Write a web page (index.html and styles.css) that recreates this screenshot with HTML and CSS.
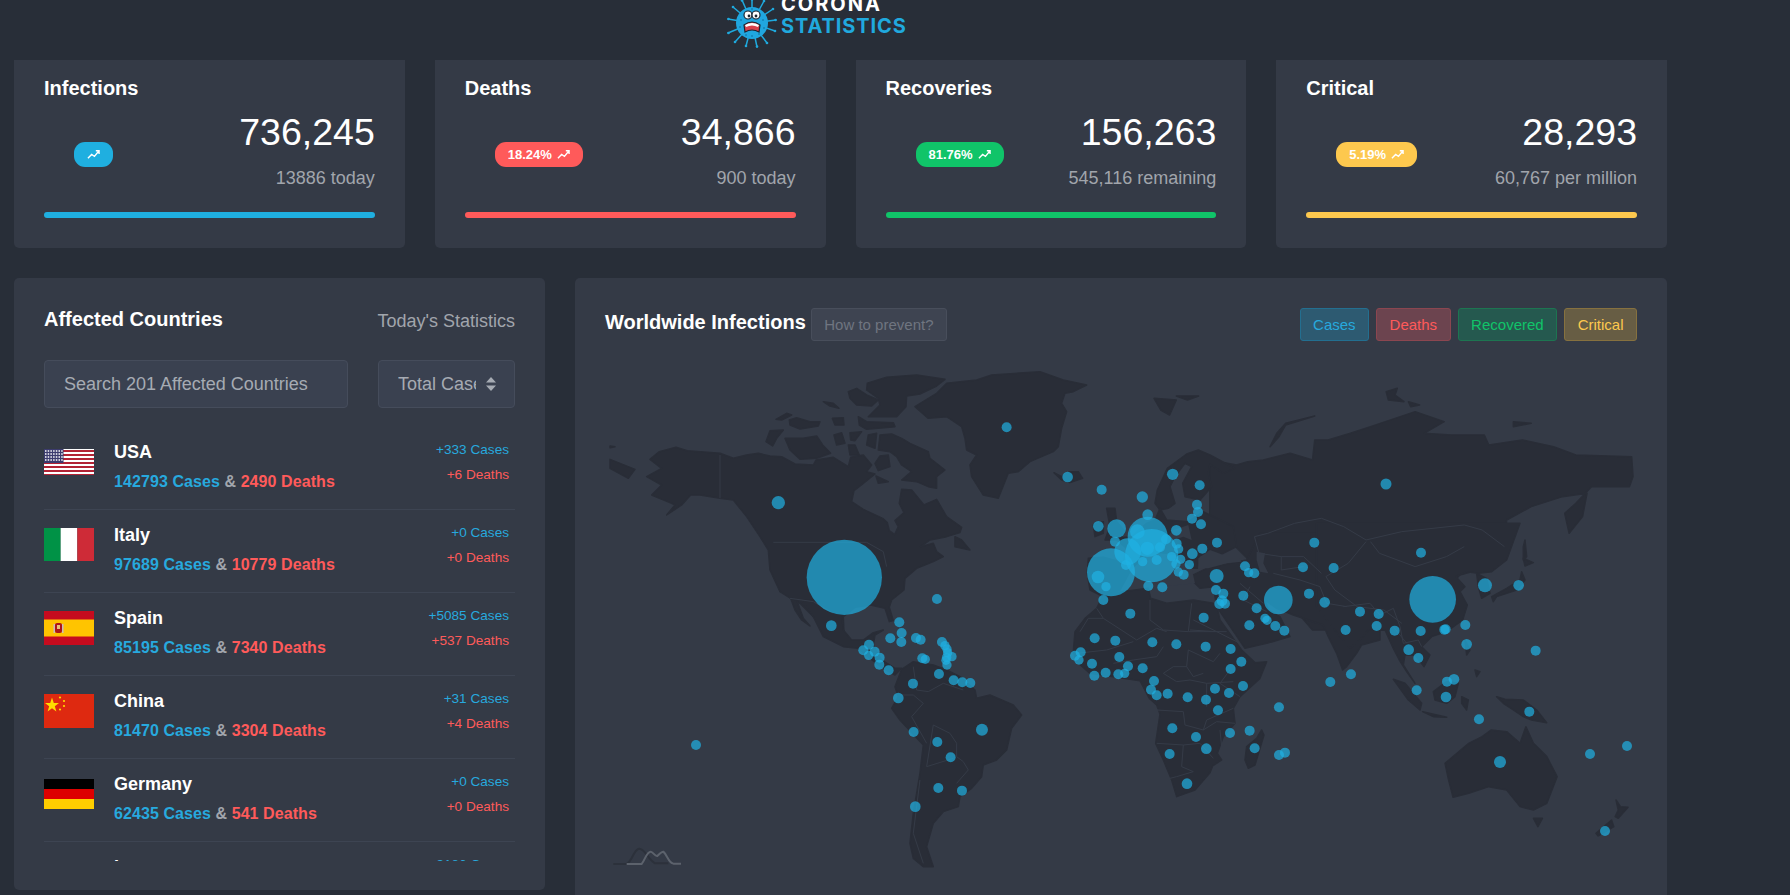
FILE: index.html
```html
<!DOCTYPE html>
<html lang="en">
<head>
<meta charset="utf-8">
<title>Corona Statistics</title>
<link rel="stylesheet" href="styles.css">
</head>
<body>
<header class="topbar">
  <div class="logo">
    <svg class="logo-mark" viewBox="0 0 50 50" width="50" height="50">
      <g class="spikes">
        <path d="M25 25L25 1M25 25L37 3M25 25L46 11M25 25L49 22M25 25L48 33M25 25L40 45M25 25L30 49M25 25L19 48M25 25L8 44M25 25L1 35M25 25L1 21M25 25L6 9M25 25L15 2"/>
      </g>
      <g class="spike-tips">
        <circle cx="25" cy="1.500" r="1.300"/><circle cx="37" cy="3" r="1.300"/><circle cx="46" cy="11" r="1.300"/><circle cx="48.500" cy="22" r="1.300"/><circle cx="48" cy="33" r="1.300"/><circle cx="40" cy="45" r="1.300"/><circle cx="30" cy="48.500" r="1.300"/><circle cx="19" cy="48" r="1.300"/><circle cx="8" cy="44" r="1.300"/><circle cx="1.500" cy="35" r="1.300"/><circle cx="1.500" cy="21" r="1.300"/><circle cx="6" cy="9" r="1.300"/><circle cx="15" cy="2.500" r="1.300"/>
      </g>
      <circle class="virus-body" cx="25" cy="25" r="16"/>
      <g class="virus-dots">
        <circle cx="14" cy="22" r="1"/><circle cx="36" cy="22" r="1"/><circle cx="13" cy="29" r="1"/><circle cx="37" cy="30" r="1"/><circle cx="19" cy="37" r="1"/><circle cx="25" cy="38" r="1"/><circle cx="32" cy="36" r="1"/><circle cx="25" cy="11" r="1"/>
      </g>
      <circle class="eye" cx="21" cy="17" r="4"/>
      <circle class="eye" cx="29" cy="17" r="4"/>
      <circle class="pupil" cx="22" cy="18" r="1.400"/>
      <circle class="pupil" cx="29" cy="18" r="1.400"/>
      <path class="mouth" d="M17 27Q25 21 33 27L32 34Q25 30 18 34Z"/>
      <path class="teeth" d="M18 27Q25 23 32 27L31 29Q25 26 19 29Z"/>
    </svg>
    <div class="logo-text">
      <div class="logo-top">CORONA</div>
      <div class="logo-bottom">STATISTICS</div>
    </div>
  </div>
</header>

<main class="content">
  <section class="stats">
    <article class="card">
      <h3 class="card-title">Infections</h3>
      <div class="card-body">
        <span class="badge bg-blue"><svg class="trend" viewBox="0 0 14 14"><path d="M1 11L5 7L8 9L13 3M9.500 3H13V6.500"/></svg></span>
        <div class="figures"><div class="figure">736,245</div><div class="sub">13886 today</div></div>
      </div>
      <div class="bar bg-blue"></div>
    </article>
    <article class="card">
      <h3 class="card-title">Deaths</h3>
      <div class="card-body">
        <span class="badge bg-red">18.24%<svg class="trend" viewBox="0 0 14 14"><path d="M1 11L5 7L8 9L13 3M9.500 3H13V6.500"/></svg></span>
        <div class="figures"><div class="figure">34,866</div><div class="sub">900 today</div></div>
      </div>
      <div class="bar bg-red"></div>
    </article>
    <article class="card">
      <h3 class="card-title">Recoveries</h3>
      <div class="card-body">
        <span class="badge bg-green">81.76%<svg class="trend" viewBox="0 0 14 14"><path d="M1 11L5 7L8 9L13 3M9.500 3H13V6.500"/></svg></span>
        <div class="figures"><div class="figure">156,263</div><div class="sub">545,116 remaining</div></div>
      </div>
      <div class="bar bg-green"></div>
    </article>
    <article class="card">
      <h3 class="card-title">Critical</h3>
      <div class="card-body">
        <span class="badge bg-yellow">5.19%<svg class="trend" viewBox="0 0 14 14"><path d="M1 11L5 7L8 9L13 3M9.500 3H13V6.500"/></svg></span>
        <div class="figures"><div class="figure">28,293</div><div class="sub">60,767 per million</div></div>
      </div>
      <div class="bar bg-yellow"></div>
    </article>
  </section>

  <section class="lower">
    <aside class="panel countries">
      <div class="panel-head">
        <h3 class="panel-title">Affected Countries</h3>
        <span class="panel-note">Today's Statistics</span>
      </div>
      <div class="filters">
        <input class="field" type="text" placeholder="Search 201 Affected Countries">
        <div class="select-wrap">
          <select class="field select"><option>Total Cases</option></select>
          <svg class="select-arrows" viewBox="0 0 10 14" width="10" height="14"><path d="M5 0L10 5.500H0ZM5 14L0 8.500H10Z"/></svg>
        </div>
      </div>
      <ul class="list">
        <li class="row">
          <div class="flag-box"><svg class="flag" width="50" height="26" viewBox="0 0 50 26">
            <rect width="50" height="26" fill="#fff"/>
            <path d="M0 1h50v2H0zM0 5h50v2H0zM0 9h50v2H0zM0 13h50v2H0zM0 17h50v2H0zM0 21h50v2H0zM0 25h50v1H0z" fill="#b22234"/>
            <rect width="19.500" height="14" fill="#3c3b6e"/>
            <path d="M1 2h18M1 5h18M1 8h18M1 11h18" stroke="#fff" stroke-width="1.400" stroke-dasharray="1.500 1.200"/>
          </svg></div>
          <div class="info">
            <div class="name">USA</div>
            <div class="totals"><span class="c-blue">142793 Cases</span> &amp; <span class="c-red">2490 Deaths</span></div>
          </div>
          <div class="today"><div class="c-blue">+333 Cases</div><div class="c-red">+6 Deaths</div></div>
        </li>
        <li class="row">
          <div class="flag-box"><svg class="flag" width="50" height="33" viewBox="0 0 3 2" preserveAspectRatio="none">
            <rect width="1" height="2" fill="#009246"/><rect x="1" width="1" height="2" fill="#fff"/><rect x="2" width="1" height="2" fill="#ce2b37"/>
          </svg></div>
          <div class="info">
            <div class="name">Italy</div>
            <div class="totals"><span class="c-blue">97689 Cases</span> &amp; <span class="c-red">10779 Deaths</span></div>
          </div>
          <div class="today"><div class="c-blue">+0 Cases</div><div class="c-red">+0 Deaths</div></div>
        </li>
        <li class="row">
          <div class="flag-box"><svg class="flag" width="50" height="34" viewBox="0 0 50 34">
            <rect width="50" height="34" fill="#c60b1e"/><rect y="8.500" width="50" height="17" fill="#ffc400"/>
            <rect x="11" y="12" width="7" height="10" rx="2" fill="#ad1519"/><rect x="9.500" y="13" width="1.500" height="9" fill="#cbb"/><rect x="18" y="13" width="1.500" height="9" fill="#cbb"/><rect x="13" y="14" width="3" height="4" fill="#e8c27a"/>
          </svg></div>
          <div class="info">
            <div class="name">Spain</div>
            <div class="totals"><span class="c-blue">85195 Cases</span> &amp; <span class="c-red">7340 Deaths</span></div>
          </div>
          <div class="today"><div class="c-blue">+5085 Cases</div><div class="c-red">+537 Deaths</div></div>
        </li>
        <li class="row">
          <div class="flag-box"><svg class="flag" width="50" height="34" viewBox="0 0 50 34">
            <rect width="50" height="34" fill="#de2910"/>
            <path d="M8 3.500L9.800 9L15 9L10.800 12.200L12.400 17.500L8 14.300L3.600 17.500L5.200 12.200L1 9L6.200 9Z" fill="#ffde00"/>
            <circle cx="16" cy="3.500" r="1.100" fill="#ffde00"/><circle cx="20" cy="7" r="1.100" fill="#ffde00"/><circle cx="20" cy="12" r="1.100" fill="#ffde00"/><circle cx="16" cy="15.500" r="1.100" fill="#ffde00"/>
          </svg></div>
          <div class="info">
            <div class="name">China</div>
            <div class="totals"><span class="c-blue">81470 Cases</span> &amp; <span class="c-red">3304 Deaths</span></div>
          </div>
          <div class="today"><div class="c-blue">+31 Cases</div><div class="c-red">+4 Deaths</div></div>
        </li>
        <li class="row">
          <div class="flag-box"><svg class="flag" width="50" height="30" viewBox="0 0 50 30">
            <rect width="50" height="10" fill="#000"/><rect y="10" width="50" height="10" fill="#d00"/><rect y="20" width="50" height="10" fill="#ffce00"/>
          </svg></div>
          <div class="info">
            <div class="name">Germany</div>
            <div class="totals"><span class="c-blue">62435 Cases</span> &amp; <span class="c-red">541 Deaths</span></div>
          </div>
          <div class="today"><div class="c-blue">+0 Cases</div><div class="c-red">+0 Deaths</div></div>
        </li>
        <li class="row">
          <div class="flag-box"><svg class="flag" width="50" height="29" viewBox="0 0 50 29">
            <rect width="50" height="10" fill="#239f40"/><rect y="10" width="50" height="9" fill="#fff"/><rect y="19" width="50" height="10" fill="#da0000"/>
          </svg></div>
          <div class="info">
            <div class="name">Iran</div>
            <div class="totals"><span class="c-blue">41495 Cases</span> &amp; <span class="c-red">2757 Deaths</span></div>
          </div>
          <div class="today"><div class="c-blue">+3186 Cases</div><div class="c-red">+117 Deaths</div></div>
        </li>
      </ul>
    </aside>

    <section class="panel map-panel">
      <div class="map-head">
        <h3 class="map-title">Worldwide Infections</h3>
        <button class="btn btn-muted" type="button">How to prevent?</button>
        <div class="toggles">
          <button class="btn btn-blue" type="button">Cases</button>
          <button class="btn btn-red" type="button">Deaths</button>
          <button class="btn btn-green" type="button">Recovered</button>
          <button class="btn btn-yellow" type="button">Critical</button>
        </div>
      </div>
      <svg class="map" viewBox="575 341 1092 577" width="1092" height="577">
        <g class="land">
          <!-- North America, Greenland, Iceland -->
          <g transform="translate(600 370) scale(.3333)">
            <path d="M150 268L178 245L228 232L262 242L360 250L400 265L440 255L475 250L510 258L545 260L585 282L640 285L648 270L700 262L745 290L752 262L790 255L815 285L800 305L825 312L790 340L762 362L755 395L790 418L848 445L862 458L868 482L884 494L895 470L885 452L912 428L898 400L905 358L935 360L972 405L1010 388L1040 440L1085 472L1080 488L1040 500L990 510L962 530L1000 520L1010 545L1030 560L1000 575L950 595L915 625L912 660L875 690L868 712L880 752L868 755L855 715L812 705L765 712L730 740L732 790L745 810L700 810L670 770L600 700L572 685L540 665L510 600L505 540L480 500L440 440L400 390L360 385L300 375L272 375L245 405L200 435L225 405L215 400L155 375L185 345L140 320L185 295Z"/>
            <path d="M802 40L860 22L950 15L1035 28L1010 48L960 72L920 78L918 110L890 140L805 140L840 105L835 85L800 60Z"/>
            <path d="M745 65L770 55L800 75L835 90L815 108L770 105L750 85Z"/>
            <path d="M775 140L800 155L880 158L885 170L800 178L778 165Z"/>
            <path d="M697 145L730 143L732 165L705 165Z"/>
            <path d="M568 150L590 143L630 155L660 155L655 168L600 177L570 165Z"/>
            <path d="M528 148L560 130L575 135L545 150Z"/>
            <path d="M670 95L700 100L717 115L690 108Z"/>
            <path d="M555 205L610 205L650 198L668 225L692 250L650 265L600 268L570 240Z"/>
            <path d="M510 182L550 180L530 205L518 228L498 215Z"/>
            <path d="M702 195L725 188L735 220L710 225Z"/>
            <path d="M750 188L785 185L765 212L752 210Z"/>
            <path d="M805 195L830 190L825 235L800 225Z"/>
            <path d="M840 195L875 192L905 205L930 220L985 245L990 265L1035 300L1010 320L1010 355L985 350L950 335L905 330L935 305L905 285L890 260L870 245L835 240Z"/>
            <path d="M745 225L765 225L778 255L750 255Z"/>
            <path d="M840 258L865 255L870 290L835 302L825 280Z"/>
            <path d="M828 318L865 335L835 340Z"/>
            <path d="M30 268L105 298L85 325L30 295Z"/>
            <path d="M30 228L45 230L30 233Z"/>
            <path d="M1065 500L1085 510L1110 540L1065 530Z"/>
            <path d="M945 110L1010 70L1040 40L1130 30L1175 15L1320 5L1390 30L1460 45L1420 65L1395 70L1385 100L1400 125L1385 175L1375 230L1360 245L1290 275L1255 305L1225 310L1195 385L1150 375L1115 320L1110 285L1130 255L1100 240L1095 205L1085 170L1040 140L985 145Z"/>
            <path d="M1362 308L1385 320L1410 305L1435 305L1448 325L1410 338L1385 330Z"/>
          </g>
          <!-- Mexico, Central and South America -->
          <g transform="translate(580 580) scale(.3333)">
            <path d="M665 60L700 110L730 170L790 200L835 205L870 235L910 265L945 285L965 265L945 265L905 240L890 215L880 195L885 165L910 150L880 158L850 180L815 180L790 150L785 100L800 60Z"/>
            <path d="M632 55L650 60L670 115L690 138L665 120L645 90Z"/>
            <path d="M965 268L1000 245L1060 255L1100 270L1140 290L1185 330L1190 355L1230 345L1300 375L1325 405L1295 445L1280 510L1250 540L1210 555L1205 590L1175 625L1140 650L1135 680L1090 695L1060 730L1040 800L1060 860L1030 860L1000 835L990 790L1000 700L1020 580L1030 495L960 420L935 385L955 350L945 320Z"/>
          </g>
          <!-- Russia and northern Asia -->
          <g transform="translate(1000 290) scale(.4464 .3333)">
            <path d="M470 510L530 525L555 515L590 510L650 490L700 510L705 450L735 450L785 430L830 410L930 365L995 395L950 430L1010 435L1085 435L1095 465L1170 450L1240 470L1290 495L1415 500L1418 560L1410 590L1325 590L1290 640L1265 670L1275 730L1305 680L1315 610L1260 620L1190 650L1135 690L1130 770L1085 835L1030 855L1000 900L1000 1020L700 1020L610 880L520 760L470 720Z"/>
            <path d="M345 325L395 330L380 375L360 360Z"/>
            <path d="M395 318L445 318L420 330Z"/>
            <path d="M620 430L640 400L705 378L640 405L625 440L605 470Z"/>
            <path d="M865 305L890 295L885 315L905 335L870 330Z"/>
            <path d="M915 335L940 345L920 350Z"/>
            <path d="M1150 395L1190 400L1150 410Z"/>
          </g>
          <!-- Europe, Middle East, India -->
          <g transform="translate(1060 440) scale(.3333)">
            <path d="M285 190L292 150L322 85L380 42L415 30L450 45L525 85L490 100L450 72L445 100L455 140L420 180L375 170L368 130L395 80L375 70L345 110L330 140L345 190L325 205L300 210Z"/>
            <path d="M82 400L85 355L130 352L190 368L200 325L165 295L215 290L260 250L285 240L300 205L320 240L385 245L430 215L520 260L530 320L470 350L420 345L412 385L395 385L365 420L345 390L320 345L300 340L350 395L345 430L290 345L260 345L215 385L180 450L130 470L90 450Z"/>
            <path d="M140 205L165 205L170 245L195 275L175 300L135 300L150 260Z"/>
            <path d="M100 255L130 245L130 280L105 290Z"/>
            <path d="M400 405L440 385L500 372L560 360L600 280L900 280L960 500L960 600L905 615L890 640L860 680L848 690L830 640L805 590L790 555L700 525L650 505L615 480L625 510L660 530L690 590L620 610L555 625L470 500L465 470L460 440L420 445L395 420Z"/>
          </g>
          <!-- Africa, Madagascar -->
          <g transform="translate(1060 640) scale(.3333)">
            <path d="M110 -95L130 -135L185 -145L265 -155L272 -125L320 -110L400 -120L460 -110L472 -95L480 -60L545 30L585 68L620 65L600 115L540 170L520 205L525 250L490 290L472 340L485 360L458 378L450 398L405 450L350 470L335 420L310 360L287 310L300 222L290 195L268 175L240 122L190 115L90 100L50 65L40 35L45 -25L75 -65Z"/>
            <path d="M605 270L612 285L585 375L565 385L555 360L560 320L590 295Z"/>
          </g>
          <!-- East and South-East Asia -->
          <g transform="translate(1350 540) scale(.3333)">
            <path d="M-100 -50L510 -50L470 60L425 95L385 100L350 95L318 110L345 140L330 155L352 195L338 240L290 275L245 290L215 320L240 345L222 380L195 345L165 345L160 375L195 430L170 395L148 360L130 325L105 270L55 270L30 300L0 325L-30 290L-100 200Z"/>
            <path d="M380 100L410 115L420 160L395 175L385 140Z"/>
            <path d="M515 95L525 120L500 150L440 170L430 185L425 170L470 145L510 120Z"/>
            <path d="M520 55L550 68L525 78Z"/>
            <path d="M525 0L530 50L520 60L520 20Z"/>
            <path d="M345 300L360 330L350 345Z"/>
            <path d="M375 390L390 395L380 410Z"/>
            <path d="M250 455L290 425L325 430L315 470L290 490L255 480Z"/>
            <path d="M130 418L165 430L215 490L210 510L175 480Z"/>
            <path d="M218 515L290 532L250 530Z"/>
            <path d="M335 470L355 480L350 510L335 490Z"/>
            <path d="M440 470L465 478L520 480L560 510L590 548L545 540L520 530L490 510L460 490Z"/>
          </g>
          <!-- Oceania -->
          <g transform="translate(1000 600) scale(.4464 .3333)">
            <path d="M997 490L1050 430L1080 410L1100 390L1135 395L1165 430L1178 380L1195 430L1225 470L1248 530L1225 610L1195 630L1165 620L1135 570L1095 560L1050 580L1015 592L1005 540Z"/>
            <path d="M1195 655L1215 655L1205 680Z"/>
            <path d="M1380 600L1390 620L1407 622L1385 655L1378 650L1385 630Z"/>
            <path d="M1370 660L1375 680L1340 708L1335 700Z"/>
          </g>
        </g>
        <g class="water">
          <g transform="translate(1060 440) scale(.3333)">
            <path d="M415 355L450 330L490 345L530 345L545 365L500 370L445 385L415 385Z"/>
            <path d="M590 335L615 340L610 370L625 400L600 395L590 360Z"/>
            <path d="M320 290L340 270L385 255L395 300L370 290L340 300Z"/>
            <path d="M300 340L345 345L395 385L405 430L300 440L240 390L265 350Z"/>
          </g>
        </g>
        <g class="borders">
          <g transform="translate(600 370) scale(.3333)">
            <path d="M360 255L360 385M520 517L800 517L850 545L860 590M570 685L640 695L700 730"/>
          </g>
          <g transform="translate(580 580) scale(.3333)">
            <path d="M1000 260L1010 330L1045 335L1090 310L1150 330M960 345L1000 345L1030 370L995 410L1040 490M1040 560L1060 435L1110 460L1130 490L1130 530L1150 545L1165 570L1130 610M1040 560L1120 535M1020 600L1000 760L1030 850"/>
          </g>
          <g transform="translate(1000 290) scale(.4464 .3333)">
            <path d="M570 740L600 730L660 700L720 685L770 710L820 750L900 725L1040 705L1080 720L1130 770M830 755L850 790L930 830L1000 800L1040 770M630 800L680 800L720 850M820 755L780 820L730 860L750 900L800 950L860 960L900 1000M570 740L580 790L630 800L630 840L680 830"/>
          </g>
          <g transform="translate(1060 440) scale(.3333)">
            <path d="M60 575L85 535L130 535L230 600L290 565L320 575M130 535L110 505M270 480L270 540L310 570L385 575L395 490M385 575L500 575M390 570L470 575M400 540L540 610M570 440L550 480L620 515M540 430L610 490M640 400L720 420L780 440L800 490L860 500"/>
          </g>
          <g transform="translate(1060 640) scale(.3333)">
            <path d="M50 40L140 30L220 5M160 70L220 60L290 50L310 20M310 100L340 80L380 80L385 30L460 65L480 40M310 100L350 125L390 120L440 130L520 125M380 80L400 110L430 100M290 210L370 215L375 255L430 270L470 245L525 250M290 310L370 315L420 310L460 355M370 315L365 380L400 395L350 410M330 415L350 410M430 270L440 240L520 205M440 130L440 200M480 270L485 320M510 90L480 130L540 170"/>
          </g>
          <g transform="translate(1350 540) scale(.3333)">
            <path d="M-20 200L60 190L90 225L130 205L150 260L160 310L205 300L215 320M130 260L170 310"/>
          </g>
        </g>
        <g class="bubbles">
          <g transform="translate(600 370) scale(.3333)">
            <circle cx="1220" cy="172" r="15"/><circle cx="1403" cy="321" r="16"/><circle cx="535" cy="398" r="20"/><circle cx="733" cy="622" r="113"/><circle cx="694" cy="767" r="16"/><circle cx="1011" cy="687" r="15"/>
          </g>
          <g transform="translate(580 580) scale(.3333)">
            <circle cx="958" cy="127" r="15"/><circle cx="965" cy="159" r="15"/><circle cx="964" cy="186" r="15"/><circle cx="931" cy="175" r="15"/><circle cx="1008" cy="174" r="15"/><circle cx="1022" cy="179" r="15"/><circle cx="867" cy="194" r="15"/><circle cx="850" cy="211" r="15"/><circle cx="866" cy="226" r="14"/><circle cx="884" cy="215" r="15"/><circle cx="899" cy="233" r="15"/><circle cx="898" cy="254" r="15"/><circle cx="926" cy="271" r="15"/><circle cx="1086" cy="186" r="15"/><circle cx="1095" cy="197" r="14"/><circle cx="1101" cy="207" r="14"/><circle cx="1103" cy="218" r="14"/><circle cx="1100" cy="232" r="14"/><circle cx="1116" cy="230" r="14"/><circle cx="1098" cy="241" r="14"/><circle cx="1101" cy="255" r="14"/><circle cx="1027" cy="235" r="15"/><circle cx="1036" cy="238" r="14"/><circle cx="1077" cy="282" r="15"/><circle cx="1121" cy="301" r="15"/><circle cx="1147" cy="307" r="15"/><circle cx="1171" cy="309" r="15"/><circle cx="999" cy="311" r="15"/><circle cx="955" cy="354" r="16"/><circle cx="1001" cy="456" r="15"/><circle cx="1206" cy="449" r="18"/><circle cx="1072" cy="486" r="15"/><circle cx="1112" cy="532" r="15"/><circle cx="1075" cy="624" r="15"/><circle cx="1146" cy="632" r="15"/><circle cx="1006" cy="680" r="16"/><circle cx="348" cy="495" r="15"/>
          </g>
          <g transform="translate(1060 440) scale(.3333)">
            <circle cx="125" cy="149" r="15"/><circle cx="247" cy="171" r="17"/><circle cx="338" cy="103" r="17"/><circle cx="419" cy="136" r="15"/><circle cx="411" cy="194" r="15"/><circle cx="414" cy="216" r="15"/><circle cx="396" cy="236" r="15"/><circle cx="423" cy="253" r="15"/><circle cx="349" cy="271" r="16"/><circle cx="263" cy="224" r="16"/><circle cx="115" cy="259" r="16"/><circle cx="170" cy="266" r="28"/><circle cx="165" cy="305" r="15"/><circle cx="232" cy="275" r="22"/><circle cx="263" cy="290" r="60"/><circle cx="203" cy="335" r="40"/><circle cx="275" cy="347" r="80"/><circle cx="153" cy="397" r="72"/><circle cx="114" cy="411" r="19"/><circle cx="138" cy="440" r="14"/><circle cx="130" cy="480" r="15"/><circle cx="198" cy="375" r="15"/><circle cx="262" cy="325" r="20"/><circle cx="248" cy="365" r="14"/><circle cx="290" cy="360" r="15"/><circle cx="318" cy="298" r="15"/><circle cx="300" cy="322" r="15"/><circle cx="350" cy="311" r="15"/><circle cx="356" cy="327" r="14"/><circle cx="335" cy="350" r="14"/><circle cx="362" cy="358" r="14"/><circle cx="348" cy="372" r="14"/><circle cx="397" cy="341" r="16"/><circle cx="427" cy="326" r="15"/><circle cx="471" cy="308" r="15"/><circle cx="388" cy="374" r="14"/><circle cx="355" cy="396" r="14"/><circle cx="371" cy="404" r="15"/><circle cx="265" cy="438" r="15"/><circle cx="307" cy="442" r="15"/><circle cx="211" cy="521" r="15"/><circle cx="470" cy="408" r="21"/><circle cx="555" cy="379" r="15"/><circle cx="566" cy="398" r="14"/><circle cx="583" cy="400" r="15"/><circle cx="468" cy="450" r="15"/><circle cx="490" cy="461" r="15"/><circle cx="486" cy="482" r="16"/><circle cx="478" cy="492" r="15"/><circle cx="495" cy="491" r="15"/><circle cx="550" cy="467" r="15"/><circle cx="590" cy="505" r="15"/><circle cx="655" cy="480" r="43"/><circle cx="729" cy="382" r="15"/><circle cx="763" cy="308" r="15"/><circle cx="821" cy="384" r="15"/><circle cx="747" cy="461" r="15"/><circle cx="794" cy="487" r="16"/><circle cx="431" cy="533" r="15"/><circle cx="568" cy="556" r="15"/><circle cx="615" cy="535" r="14"/><circle cx="621" cy="541" r="14"/><circle cx="646" cy="558" r="15"/><circle cx="673" cy="572" r="15"/><circle cx="857" cy="570" r="15"/><circle cx="104" cy="595" r="15"/><circle cx="166" cy="602" r="15"/><circle cx="277" cy="607" r="15"/><circle cx="349" cy="613" r="15"/><circle cx="437" cy="620" r="15"/><circle cx="512" cy="627" r="15"/><circle cx="62" cy="637" r="15"/>
          </g>
          <g transform="translate(1060 640) scale(.3333)">
            <circle cx="45" cy="47" r="15"/><circle cx="57" cy="60" r="14"/><circle cx="96" cy="71" r="15"/><circle cx="178" cy="51" r="15"/><circle cx="204" cy="79" r="15"/><circle cx="248" cy="85" r="15"/><circle cx="103" cy="107" r="15"/><circle cx="137" cy="98" r="15"/><circle cx="175" cy="103" r="15"/><circle cx="194" cy="100" r="14"/><circle cx="282" cy="123" r="15"/><circle cx="273" cy="149" r="15"/><circle cx="290" cy="166" r="15"/><circle cx="323" cy="161" r="15"/><circle cx="383" cy="172" r="15"/><circle cx="438" cy="179" r="15"/><circle cx="465" cy="146" r="15"/><circle cx="507" cy="159" r="15"/><circle cx="549" cy="138" r="15"/><circle cx="512" cy="87" r="15"/><circle cx="544" cy="65" r="15"/><circle cx="474" cy="211" r="15"/><circle cx="337" cy="265" r="15"/><circle cx="408" cy="291" r="15"/><circle cx="439" cy="326" r="16"/><circle cx="329" cy="342" r="15"/><circle cx="510" cy="279" r="15"/><circle cx="569" cy="272" r="15"/><circle cx="584" cy="325" r="15"/><circle cx="657" cy="202" r="15"/><circle cx="657" cy="345" r="15"/><circle cx="675" cy="338" r="15"/><circle cx="381" cy="431" r="16"/><circle cx="811" cy="126" r="15"/><circle cx="873" cy="103" r="15"/>
          </g>
          <g transform="translate(1350 540) scale(.3333)">
            <circle cx="213" cy="38" r="15"/><circle cx="248" cy="178" r="70"/><circle cx="405" cy="136" r="21"/><circle cx="506" cy="136" r="16"/><circle cx="30" cy="215" r="15"/><circle cx="86" cy="222" r="15"/><circle cx="80" cy="258" r="15"/><circle cx="134" cy="272" r="15"/><circle cx="212" cy="273" r="15"/><circle cx="283" cy="269" r="15"/><circle cx="287" cy="268" r="15"/><circle cx="346" cy="255" r="15"/><circle cx="350" cy="313" r="16"/><circle cx="176" cy="329" r="16"/><circle cx="205" cy="354" r="15"/><circle cx="291" cy="425" r="15"/><circle cx="312" cy="418" r="16"/><circle cx="200" cy="451" r="15"/><circle cx="288" cy="471" r="16"/><circle cx="557" cy="332" r="15"/><circle cx="387" cy="538" r="15"/><circle cx="538" cy="515" r="15"/>
          </g>
          <circle cx="1386" cy="484" r="5.500"/><circle cx="1590" cy="754" r="5"/><circle cx="1627" cy="746" r="5"/><circle cx="1605" cy="831" r="5"/><circle cx="1500" cy="762" r="6"/>
        </g>
        <g class="map-mark" transform="translate(580 580) scale(.3333)">
          <path class="mark-dark" d="M100 852H140C160 840 160 808 178 806C195 806 205 840 225 850H265"/>
          <path class="mark-light" d="M140 852H185C195 840 200 815 212 815C222 818 224 830 232 828C240 820 244 815 250 815C262 825 265 848 280 851H303"/>
        </g>
      </svg>
    </section>
  </section>
</main>
</body>
</html>
```

FILE: styles.css
```css
* { box-sizing: border-box; }

html, body {
  margin: 0;
  height: 895px;
  overflow: hidden;
}

body {
  background: #282e38;
  color: #fff;
  font-family: "Liberation Sans", Arial, sans-serif;
  font-size: 15px;
}

h3 { margin: 0; font-weight: 700; }

/* header */
.topbar {
  height: 60px;
  padding-left: 727px;
  overflow: hidden;
}
.logo {
  display: flex;
  gap: 4px;
  margin-top: -2px;
}
.logo-mark { flex: none; }
.spikes path { fill: none; stroke: #1fa9dd; stroke-width: 1.500; stroke-linecap: round; }
.spike-tips circle { fill: #1fa9dd; }
.virus-body { fill: #20a6df; }
.virus-dots circle { fill: #1582b5; }
.eye { fill: #fff; stroke: #1b2530; stroke-width: 1.200; }
.pupil { fill: #1b2530; }
.mouth { fill: #d8404c; stroke: #1b2530; stroke-width: 1.200; }
.teeth { fill: #fff; }
.logo-text {
  margin-top: -5px;
  font-family: Inter, "Liberation Sans", sans-serif;
  font-size: 20px;
  line-height: 22px;
}
.logo-top { color: #fff; font-weight: 700; letter-spacing: 2px; }
.logo-bottom { color: #20a9de; font-weight: 700; letter-spacing: .9px; }

/* page */
.content { padding: 0 123px 0 14px; }

.stats {
  display: grid;
  grid-template-columns: repeat(4, 1fr);
  gap: 30px;
}
.card {
  height: 188px;
  padding: 16px 30px 0;
  background: #343a46;
  border-radius: 0 0 5px 5px;
}
.card-title { font-size: 20px; line-height: 24px; }
.card-body {
  display: flex;
  justify-content: space-between;
  margin-top: 8px;
}
.badge {
  display: flex;
  align-items: center;
  gap: 5px;
  height: 25px;
  margin: 34px 0 0 30px;
  padding: 0 13px;
  border-radius: 11px;
  color: #fff;
  font-size: 13px;
  font-weight: 700;
}
.trend { width: 13px; height: 13px; }
.trend path { fill: none; stroke: #fff; stroke-width: 1.500; }
.figures { text-align: right; }
.figure { padding-top: 2px; font-size: 37.500px; line-height: 45px; }
.sub {
  margin-top: 11px;
  color: #a1a5ac;
  font-size: 18px;
  line-height: 24px;
}
.bar {
  height: 6px;
  margin-top: 22px;
  border-radius: 3px;
}

.bg-blue { background: #1fafe0; }
.bg-red { background: #ff5a5a; }
.bg-green { background: #10c469; }
.bg-yellow { background: #fdc84e; }
.c-blue { color: #27a9de; }
.c-red { color: #ff5a5a; }

/* lower */
.lower {
  display: grid;
  grid-template-columns: 531px 1092px;
  gap: 30px;
  align-items: start;
  margin-top: 30px;
}
.panel {
  background: #343a46;
  border-radius: 5px;
}

/* countries */
.countries {
  height: 612px;
  padding: 29px 30px 0;
}
.panel-head {
  display: flex;
  justify-content: space-between;
  align-items: center;
  height: 24px;
}
.panel-title { font-size: 20px; line-height: 24px; }
.panel-note {
  margin-top: 4px;
  color: #a1a5ac;
  font-size: 18px;
}
.filters {
  display: grid;
  grid-template-columns: 1fr 137px;
  gap: 30px;
  margin-top: 29px;
}
.field {
  width: 100%;
  height: 48px;
  padding: 0 19px;
  background: #3a4150;
  border: 1px solid #454c5b;
  border-radius: 4px;
  color: #a6abb3;
  font: 18px "Liberation Sans", Arial, sans-serif;
  outline: none;
}
.field::placeholder { color: #a6abb3; opacity: 1; }
.select-wrap { position: relative; }
.select {
  padding: 0 38px 0 19px;
  appearance: none;
  -webkit-appearance: none;
}
.select-arrows {
  position: absolute;
  top: 17px;
  right: 19px;
  fill: #a6abb3;
}
.list {
  height: 434px;
  margin: 19px 0 0;
  padding: 0;
  overflow: hidden;
  list-style: none;
}
.row {
  display: flex;
  height: 83px;
  border-bottom: 1px solid #3d4452;
}
.flag-box {
  display: flex;
  align-items: center;
  flex: none;
  width: 50px;
  height: 69px;
  margin-right: 20px;
}
.flag { display: block; }
.info { padding-top: 13px; }
.name { font-size: 18px; font-weight: 700; line-height: 24px; }
.totals {
  margin-top: 6px;
  color: #a1a5ac;
  font-size: 16px;
  font-weight: 700;
  letter-spacing: .08px;
  line-height: 24px;
}
.today {
  margin-left: auto;
  padding: 10px 6px 0 0;
  font-size: 13.600px;
  line-height: 25px;
  text-align: right;
}

/* map */
.map-panel { height: 640px; overflow: hidden; }
.map-head {
  display: flex;
  align-items: flex-start;
  padding: 30px 30px 0;
}
.map-title {
  margin-right: 5px;
  font-size: 20px;
  line-height: 28px;
}
.toggles {
  display: flex;
  gap: 7px;
  margin-left: auto;
}
.btn {
  height: 33px;
  padding: 0 12.500px;
  border: 1px solid;
  border-radius: 3px;
  font: 15px "Liberation Sans", Arial, sans-serif;
}
.btn-muted { background: #3e4451; border-color: #484e5b; color: #6f7580; }
.btn-blue { background: #2d5a71; border-color: #236f90; color: #27a9de; }
.btn-red { background: #6c444f; border-color: #8b4650; color: #ff5a5a; }
.btn-green { background: #25594f; border-color: #1d7551; color: #10c469; }
.btn-yellow { background: #675d44; border-color: #86713f; color: #fdc84e; }
.map { display: block; }
.land path {
  fill: #292d37;
  stroke: #292d37;
  stroke-width: 1.500;
  stroke-linejoin: round;
  vector-effect: non-scaling-stroke;
}
.water path { fill: #343a46; }
.borders path {
  fill: none;
  stroke: #353b47;
  stroke-width: 1;
  vector-effect: non-scaling-stroke;
}
.bubbles circle { fill: rgba(31, 176, 227, .7); }
.map-mark path {
  fill: none;
  stroke-width: 2;
  vector-effect: non-scaling-stroke;
}
.mark-dark { stroke: #2c313b; }
.mark-light { stroke: #5c626c; }
```
